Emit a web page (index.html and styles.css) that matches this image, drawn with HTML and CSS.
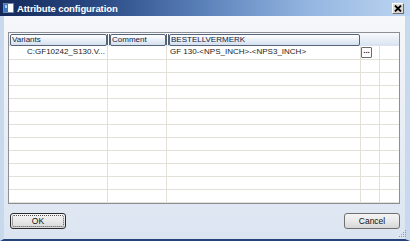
FILE: index.html
```html
<!DOCTYPE html>
<html lang="en">
<head>
<meta charset="UTF-8">
<title>Attribute configuration</title>
<link rel="stylesheet" href="styles.css">
</head>
<body>

<div class="window">
  <!-- title bar -->
  <div class="titlebar">
    <svg class="app-icon" width="11" height="10" viewBox="0 0 11 10">
      <rect x="0.5" y="0.5" width="10" height="9" fill="#fff" stroke="#6f87ad"/>
      <rect x="1" y="1" width="4" height="8" fill="#3d78c4"/>
      <rect x="2" y="2" width="2" height="3" fill="#9fd4f5"/>
    </svg>
    <span class="title">Attribute configuration</span>
    <div class="close-btn">
      <svg width="8" height="7" viewBox="0 0 8 7">
        <path d="M1 0.5 L7 6.5 M7 0.5 L1 6.5" stroke="#000" stroke-width="1.8"/>
      </svg>
    </div>
  </div>

  <div class="dialog">
    <div class="grid">
      <div class="grid-head">
        <div class="head-cell w1">Variants</div>
        <div class="grip"></div>
        <div class="head-cell w2">Comment</div>
        <div class="grip"></div>
        <div class="head-cell w3">BESTELLVERMERK</div>
      </div>
      <div class="grid-body" id="gridBody"></div>
    </div>

    <div class="footer">
      <button class="btn btn-default"><span>OK</span></button>
      <button class="btn">Cancel</button>
    </div>

    <svg class="size-grip" width="9" height="9" viewBox="0 0 9 9">
      <g fill="#8a9ab0">
        <rect x="7" y="1" width="1" height="1"/>
        <rect x="5" y="3" width="1" height="1"/><rect x="7" y="3" width="1" height="1"/>
        <rect x="3" y="5" width="1" height="1"/><rect x="5" y="5" width="1" height="1"/><rect x="7" y="5" width="1" height="1"/>
        <rect x="1" y="7" width="1" height="1"/><rect x="3" y="7" width="1" height="1"/><rect x="5" y="7" width="1" height="1"/><rect x="7" y="7" width="1" height="1"/>
      </g>
    </svg>
  </div>
</div>

<script src="app.js"></script>
</body>
</html>
```

FILE: styles.css
```css
* {
  box-sizing: border-box;
}

body {
  margin: 0;
  background: #fff;
  font-family: 'Liberation Sans', Arial, sans-serif;
  font-size: 8px;
  color: #1b1b1b;
}

.window {
  width: 410px;
  height: 241px;
  display: flex;
  flex-direction: column;
}

/* タイトルバー */
.titlebar {
  height: 16px;
  display: flex;
  align-items: center;
  padding-left: 3px;
  background: linear-gradient(to right, #14295a 0%, #2c4c86 25%, #5c82ba 50%, #93b5e0 75%, #bcd5f1 100%);
}

.app-icon {
  flex: none;
  margin-right: 3px;
}

.title {
  flex: 1;
  color: #fff;
  font-weight: bold;
  font-size: 9.5px;
  letter-spacing: -0.1px;
}

.close-btn {
  width: 12px;
  height: 11px;
  margin-right: 6px;
  display: flex;
  align-items: center;
  justify-content: center;
  background: #dcd9d2;
  border: 1px solid;
  border-color: #fff #6d6d6d #6d6d6d #fff;
}

.dialog {
  position: relative;
  flex: 1;
  padding: 16px 5px 0 4px;
  border-left: 4px solid #c8d8ed;
  border-right: 5px solid #c8d8ed;
  border-bottom: 2px solid #24437a;
  background: linear-gradient(to bottom, #f6f7f9, #dbe5f1);
}

.grid {
  width: 392px;
  height: 172px;
  border: 1px solid #8b8e92;
  background: #fff;
  display: flex;
  flex-direction: column;
}

.grid-head {
  height: 13px;
  display: flex;
  background: linear-gradient(to bottom, #f7f9fc, #d8e3f1);
}

.head-cell {
  height: 12px;
  margin-top: 1px;
  padding-left: 1px;
  line-height: 10px;
  color: #10243f;
  border: 1px solid #566379;
  border-radius: 2px;
  background: linear-gradient(to bottom, #ffffff, #d4e0ef);
  white-space: nowrap;
  overflow: hidden;
}

.w1 { width: 97px; margin-left: 1px; }
.w2 { width: 56px; }
.w3 { width: 191px; }

.grip {
  width: 3px;
  margin: 1px 0;
  border-left: 1px solid #55606e;
  border-right: 1px solid #55606e;
  background: #fff;
}

.grid-body {
  flex: 1;
  display: grid;
  grid-template-columns: 98px 58px 193px 18px 19px;
  grid-template-rows: 13px;
  grid-auto-rows: 12px;
  gap: 1px;
  background: #e3e0d9;
  overflow: hidden;
}

.grid-body div {
  background: #fff;
  line-height: 12px;
  white-space: nowrap;
  overflow: hidden;
}

.grid-body .right {
  text-align: right;
  padding-right: 2px;
}

.grid-body .text {
  padding-left: 3px;
}

.dots {
  display: block;
  width: 11px;
  height: 11px;
  margin-top: 1px;
  border: 1px solid #6b6b6b;
  border-radius: 1px;
  background: #fbfbfb;
  font-weight: bold;
  font-size: 8px;
  line-height: 5px;
  text-align: center;
}

.footer {
  display: flex;
  justify-content: space-between;
  margin-top: 9px;
  padding-left: 2px;
  width: 392px;
}

.btn {
  width: 56px;
  height: 16px;
  padding: 0;
  font-family: 'Liberation Sans', Arial, sans-serif;
  font-size: 8.5px;
  color: #111;
  border: 1px solid #707070;
  border-radius: 3px;
  background: linear-gradient(to bottom, #f4f4f4 0%, #e9e9e9 50%, #d6d6d6 100%);
}

.btn-default {
  border-color: #2b2b2b;
  padding: 1px;
}

.btn-default span {
  display: block;
  height: 100%;
  line-height: 11px;
  border: 1px dotted #555;
  border-radius: 2px;
}

.size-grip {
  position: absolute;
  right: -2px;
  bottom: 1px;
}
```

FILE: app.js
```js
// グリッドの行を生成
const body = document.getElementById('gridBody');
const rows = 12;

for (let r = 0; r < rows; r++) {
  const cells = ['', '', '', '', ''];
  let html = '';
  if (r === 0) {
    html += '<div class="right">C:GF10242_S130.V...</div>';
    html += '<div></div>';
    html += '<div class="text">GF 130-&lt;NPS_INCH&gt;-&lt;NPS3_INCH&gt;</div>';
    html += '<div><span class="dots">...</span></div>';
    html += '<div></div>';
  } else {
    html = cells.map(() => '<div></div>').join('');
  }
  body.insertAdjacentHTML('beforeend', html);
}
```
